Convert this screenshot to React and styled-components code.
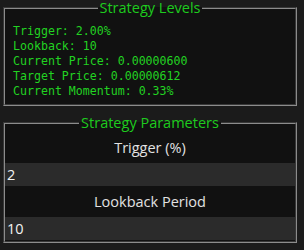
import React from "react";
import styled, { createGlobalStyle } from "styled-components";

const Global = createGlobalStyle`
  html, body { margin: 0; padding: 0; background: #1b1b1b; }
  body { width: 304px; height: 250px; overflow: hidden; font-family: "Open Sans", "Noto Sans", sans-serif; }
`;

const Page = styled.div`
  display: flex;
  flex-direction: column;
  gap: 9px;
  padding: 0 7px 0 3px;
`;

const Panel = styled.fieldset`
  margin: 0;
  min-width: 0;
  border: 2px groove #8c8c8c;
  background: #111111;
  padding: ${(p) => p.$pad || "0"};
`;

const Legend = styled.legend`
  margin: 0 auto;
  padding: 0 2px;
  color: #1ecb1e;
  font-family: "Open Sans", "Noto Sans", sans-serif;
  font-size: 14.5px;
  line-height: 16px;
`;

const MonoLine = styled.div`
  font-family: "DejaVu Sans Mono", "Liberation Mono", monospace;
  font-size: 11.6px;
  line-height: 15px;
  color: #22d322;
  white-space: pre;
`;

const FieldLabel = styled.label`
  display: block;
  text-align: center;
  padding: 5px 0;
  line-height: 21px;
  font-size: 14.5px;
  color: #e2e2e2;
`;

const Input = styled.input`
  display: block;
  box-sizing: border-box;
  width: 100%;
  height: 23px;
  margin: 0;
  border: none;
  outline: none;
  background: #2b2b2b;
  color: #f2f2f2;
  padding: 0 2px;
  font-family: "Open Sans", "Noto Sans", sans-serif;
  font-size: 14.5px;
`;

const levels = [
  "Trigger: 2.00%",
  "Lookback: 10",
  "Current Price: 0.00000600",
  "Target Price: 0.00000612",
  "Current Momentum: 0.33%",
];

export default function App() {
  return (
    <>
      <Global />
      <Page>
        <Panel $pad="8px 8px 5px 8px">
          <Legend>Strategy Levels</Legend>
          {levels.map((l) => (
            <MonoLine key={l}>{l}</MonoLine>
          ))}
        </Panel>
        <Panel $pad="1px 0 1px 0">
          <Legend>Strategy Parameters</Legend>
          <FieldLabel htmlFor="trig">Trigger (%)</FieldLabel>
          <Input id="trig" defaultValue="2" />
          <FieldLabel htmlFor="look">Lookback Period</FieldLabel>
          <Input id="look" defaultValue="10" />
        </Panel>
      </Page>
    </>
  );
}
